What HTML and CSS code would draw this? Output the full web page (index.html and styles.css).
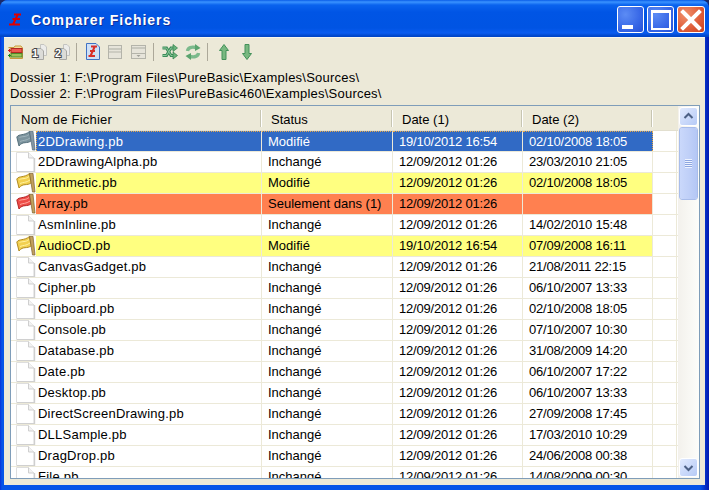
FILE: index.html
```html
<!DOCTYPE html>
<html lang="fr">
<head>
<meta charset="utf-8">
<title>Comparer Fichiers</title>
<link rel="stylesheet" href="styles.css">
</head>
<body>
<svg class="defs" width="0" height="0" aria-hidden="true">
  <defs>
    <symbol id="doc" viewBox="0 0 20 20">
      <path d="M.5 .5H12.5L18 6V19.5H.5Z" fill="#fff" stroke="#dedede"/>
      <path d="M12.5 .5V6H18" fill="#f2f2f2" stroke="#cfcfcf"/>
      <path d="M18.5 6V20" fill="none" stroke="#cfcfcf" stroke-width="1.4"/>
      <path d="M1 19.5H18" fill="none" stroke="#d0d0d0"/>
    </symbol>
    <symbol id="flag-y" viewBox="0 0 20 20">
      <path d="M.8 6C3 2.5 8 5 13.5 .5L15.5 9.5C11 13.5 7 9.5 3 15Z" fill="#f2d050" stroke="#b08a20"/>
      <path d="M3.5 6.5C6.5 5 9.5 6.5 13 3.5M4 10.5C7 9 10 10 14 7" fill="none" stroke="#fff2a0"/>
      <path d="M13.5 .5L17 .3L19 19H16.5Z" fill="#c2a05c" stroke="#7d6230" stroke-width=".7"/>
    </symbol>
    <symbol id="flag-r" viewBox="0 0 20 20">
      <path d="M.8 6C3 2.5 8 5 13.5 .5L15.5 9.5C11 13.5 7 9.5 3 15Z" fill="#ee4c48" stroke="#b42626"/>
      <path d="M3.5 6.5C6.5 5 9.5 6.5 13 3.5M4 10.5C7 9 10 10 14 7" fill="none" stroke="#ffa8a0"/>
      <path d="M13.5 .5L17 .3L19 19H16.5Z" fill="#c2a05c" stroke="#7d6230" stroke-width=".7"/>
    </symbol>
    <symbol id="flag-g" viewBox="0 0 20 20">
      <path d="M.8 6C3 2.5 8 5 13.5 .5L15.5 9.5C11 13.5 7 9.5 3 15Z" fill="#7d949e" stroke="#56707c"/>
      <path d="M3.5 6.5C6.5 5 9.5 6.5 13 3.5M4 10.5C7 9 10 10 14 7" fill="none" stroke="#a0b4bc"/>
      <path d="M13.5 .5L17 .3L19 19H16.5Z" fill="#8497a4" stroke="#566a78" stroke-width=".7"/>
    </symbol>
    <symbol id="pages" viewBox="0 0 16 16">
      <path d="M9.5 .5H13L15.5 3V11.5H9.5Z" fill="#ececea" stroke="#c4c4c0"/>
      <path d="M5.5 4.5H10L12.5 7V15.5H5.5Z" fill="#dcdcd8" stroke="#a8a8a4"/>
    </symbol>
  </defs>
</svg>
<div class="window">
  <header class="titlebar">
    <svg class="title-icon" width="14" height="13" viewBox="0 0 14 13">
      <path d="M5 1.5H12M3.5 6H11M0 11.5H11M9 1L4 11.5" fill="none" stroke="#e00000" stroke-width="2"/>
    </svg>
    <h1 class="title">Comparer Fichiers</h1>
    <div class="controls">
      <span class="ctl ctl-blue"><i class="min-glyph"></i></span>
      <span class="ctl ctl-blue"><i class="max-glyph"></i></span>
      <span class="ctl ctl-red">
        <svg width="26" height="26" viewBox="0 0 26 26"><path d="M5 5L21 21M21 5L5 21" stroke="#fff" stroke-width="4" stroke-linecap="square"/></svg>
      </span>
    </div>
  </header>
  <main class="client">
    <div class="toolbar">
      <span class="tool"><svg width="16" height="16" viewBox="0 0 16 16">
        <path d="M.5 3.5H6L7 2H13L14.5 4V14.5H2V12" fill="#f3dc9a" stroke="#c89a3c"/>
        <rect x="3" y="4.5" width="11" height="4" fill="#ec5a50" stroke="#b02a20"/>
        <rect x="3" y="9.5" width="11" height="3.5" fill="#9cc058" stroke="#4c8a28"/>
        <path d="M0 6.5H3M1.5 5V8" stroke="#d02020"/><path d="M0 11.5H3M1.5 10V13" stroke="#208a20"/>
      </svg></span>
      <span class="tool"><svg class="numbered" width="16" height="16" viewBox="0 0 16 16">
        <use href="#pages"/>
        <text x="1" y="13" class="num">1</text>
      </svg></span>
      <span class="tool"><svg class="numbered" width="16" height="16" viewBox="0 0 16 16">
        <use href="#pages"/>
        <text x="1" y="13" class="num">2</text>
      </svg></span>
      <span class="sep"></span>
      <span class="tool"><svg width="16" height="17" viewBox="0 0 16 17">
        <path d="M1.5 .5H11L14.5 4V16.5H1.5Z" fill="#cfe0f6" stroke="#3f72c4"/>
        <path d="M6 3.5H12M5 8H10M3.5 13H10M10 3L5.5 13" fill="none" stroke="#d8302a" stroke-width="2"/>
      </svg></span>
      <span class="tool"><svg width="16" height="16" viewBox="0 0 16 16">
        <rect x=".5" y="1.5" width="13" height="13" fill="#e6e4da" stroke="#b4b4aa"/>
        <path d="M1 5H13" stroke="#c8c8be" stroke-width="2"/><path d="M1 8H13" stroke="#b4b4aa"/>
      </svg></span>
      <span class="tool"><svg width="16" height="16" viewBox="0 0 16 16">
        <rect x=".5" y="1.5" width="14" height="13" fill="#e6e4da" stroke="#b4b4aa"/>
        <path d="M1 4H14" stroke="#c8c8be" stroke-width="2"/><path d="M1 9.5H14" stroke="#b4b4aa"/>
        <path d="M5.5 11L7.5 13L9.5 11Z" fill="#a0a098"/>
      </svg></span>
      <span class="sep"></span>
      <span class="tool"><svg width="16" height="16" viewBox="0 0 16 16">
        <path d="M.5 4H4.5L9 11.5H11.5M.5 11.5H4.5L9 4H11.5" fill="none" stroke="#3c8c5a" stroke-width="3"/>
        <path d="M.5 4H4.5L9 11.5H11.5M.5 11.5H4.5L9 4H11.5" fill="none" stroke="#8cc89c" stroke-width="1"/>
        <path d="M11 .5L15.5 4L11 7.5ZM11 8L15.5 11.5L11 15Z" fill="#6ab47c" stroke="#2f7f4a" stroke-width=".7"/>
      </svg></span>
      <span class="tool"><svg width="16" height="16" viewBox="0 0 16 16">
        <path d="M2.5 7C3 3.5 6.5 2.5 11 3.5" fill="none" stroke="#7cba8c" stroke-width="3.4"/>
        <path d="M13.5 9C13 12.5 9.5 13.5 5 12.5" fill="none" stroke="#7cba8c" stroke-width="3.4"/>
        <path d="M10 0L15.5 4L10 7ZM6 9L.5 12L6 16Z" fill="#5ba46e"/>
      </svg></span>
      <span class="sep"></span>
      <span class="tool"><svg width="16" height="16" viewBox="0 0 16 16">
        <path d="M3.5 6.5L8 .5L12.5 6.5H10V15.5H6V6.5Z" fill="#78b880" stroke="#43915a"/>
      </svg></span>
      <span class="tool"><svg width="16" height="16" viewBox="0 0 16 16">
        <path d="M3.5 9.5L8 15.5L12.5 9.5H10V.5H6V9.5Z" fill="#78b880" stroke="#43915a"/>
      </svg></span>
    </div>
    <p class="path first">Dossier 1: F:\Program Files\PureBasic\Examples\Sources\</p>
    <p class="path">Dossier 2: F:\Program Files\PureBasic460\Examples\Sources\</p>
    <section class="list">
      <div class="list-main">
        <div class="head">
          <span class="hcell hcell-name">Nom de Fichier</span>
          <span class="hcell hcell-status">Status</span>
          <span class="hcell hcell-d1">Date (1)</span>
          <span class="hcell hcell-d2">Date (2)</span>
          <span class="hcell hcell-end"></span>
        </div>
        <div class="row selected"><span class="ic"><svg width="20" height="20"><use href="#flag-g"/></svg></span><span class="c name">2DDrawing.pb</span><span class="c">Modifié</span><span class="c d">19/10/2012 16:54</span><span class="c d">02/10/2008 18:05</span><span class="fill"></span></div>
        <div class="row"><span class="ic"><svg width="20" height="20"><use href="#doc"/></svg></span><span class="c name">2DDrawingAlpha.pb</span><span class="c">Inchangé</span><span class="c d">12/09/2012 01:26</span><span class="c d">23/03/2010 21:05</span><span class="fill"></span></div>
        <div class="row modified"><span class="ic"><svg width="20" height="20"><use href="#flag-y"/></svg></span><span class="c name">Arithmetic.pb</span><span class="c">Modifié</span><span class="c d">12/09/2012 01:26</span><span class="c d">02/10/2008 18:05</span><span class="fill"></span></div>
        <div class="row only"><span class="ic"><svg width="20" height="20"><use href="#flag-r"/></svg></span><span class="c name">Array.pb</span><span class="c">Seulement dans (1)</span><span class="c d">12/09/2012 01:26</span><span class="c d"></span><span class="fill"></span></div>
        <div class="row"><span class="ic"><svg width="20" height="20"><use href="#doc"/></svg></span><span class="c name">AsmInline.pb</span><span class="c">Inchangé</span><span class="c d">12/09/2012 01:26</span><span class="c d">14/02/2010 15:48</span><span class="fill"></span></div>
        <div class="row modified"><span class="ic"><svg width="20" height="20"><use href="#flag-y"/></svg></span><span class="c name">AudioCD.pb</span><span class="c">Modifié</span><span class="c d">19/10/2012 16:54</span><span class="c d">07/09/2008 16:11</span><span class="fill"></span></div>
        <div class="row"><span class="ic"><svg width="20" height="20"><use href="#doc"/></svg></span><span class="c name">CanvasGadget.pb</span><span class="c">Inchangé</span><span class="c d">12/09/2012 01:26</span><span class="c d">21/08/2011 22:15</span><span class="fill"></span></div>
        <div class="row"><span class="ic"><svg width="20" height="20"><use href="#doc"/></svg></span><span class="c name">Cipher.pb</span><span class="c">Inchangé</span><span class="c d">12/09/2012 01:26</span><span class="c d">06/10/2007 13:33</span><span class="fill"></span></div>
        <div class="row"><span class="ic"><svg width="20" height="20"><use href="#doc"/></svg></span><span class="c name">Clipboard.pb</span><span class="c">Inchangé</span><span class="c d">12/09/2012 01:26</span><span class="c d">02/10/2008 18:05</span><span class="fill"></span></div>
        <div class="row"><span class="ic"><svg width="20" height="20"><use href="#doc"/></svg></span><span class="c name">Console.pb</span><span class="c">Inchangé</span><span class="c d">12/09/2012 01:26</span><span class="c d">07/10/2007 10:30</span><span class="fill"></span></div>
        <div class="row"><span class="ic"><svg width="20" height="20"><use href="#doc"/></svg></span><span class="c name">Database.pb</span><span class="c">Inchangé</span><span class="c d">12/09/2012 01:26</span><span class="c d">31/08/2009 14:20</span><span class="fill"></span></div>
        <div class="row"><span class="ic"><svg width="20" height="20"><use href="#doc"/></svg></span><span class="c name">Date.pb</span><span class="c">Inchangé</span><span class="c d">12/09/2012 01:26</span><span class="c d">06/10/2007 17:22</span><span class="fill"></span></div>
        <div class="row"><span class="ic"><svg width="20" height="20"><use href="#doc"/></svg></span><span class="c name">Desktop.pb</span><span class="c">Inchangé</span><span class="c d">12/09/2012 01:26</span><span class="c d">06/10/2007 13:33</span><span class="fill"></span></div>
        <div class="row"><span class="ic"><svg width="20" height="20"><use href="#doc"/></svg></span><span class="c name">DirectScreenDrawing.pb</span><span class="c">Inchangé</span><span class="c d">12/09/2012 01:26</span><span class="c d">27/09/2008 17:45</span><span class="fill"></span></div>
        <div class="row"><span class="ic"><svg width="20" height="20"><use href="#doc"/></svg></span><span class="c name">DLLSample.pb</span><span class="c">Inchangé</span><span class="c d">12/09/2012 01:26</span><span class="c d">17/03/2010 10:29</span><span class="fill"></span></div>
        <div class="row"><span class="ic"><svg width="20" height="20"><use href="#doc"/></svg></span><span class="c name">DragDrop.pb</span><span class="c">Inchangé</span><span class="c d">12/09/2012 01:26</span><span class="c d">24/06/2008 00:38</span><span class="fill"></span></div>
        <div class="row"><span class="ic"><svg width="20" height="20"><use href="#doc"/></svg></span><span class="c name">File.pb</span><span class="c">Inchangé</span><span class="c d">12/09/2012 01:26</span><span class="c d">14/08/2009 00:30</span><span class="fill"></span></div>
      </div>
      <div class="scrollbar">
        <span class="sb-btn"><svg width="19" height="19" viewBox="0 0 19 19"><path d="M5.5 11L9.5 7L13.5 11" fill="none" stroke="#4d6185" stroke-width="2"/></svg></span>
        <span class="sb-thumb"><i class="grip"></i></span>
        <span class="sb-track"></span>
        <span class="sb-btn"><svg width="19" height="19" viewBox="0 0 19 19"><path d="M5.5 8L9.5 12L13.5 8" fill="none" stroke="#4d6185" stroke-width="2"/></svg></span>
      </div>
    </section>
  </main>
</div>
</body>
</html>
```
FILE: styles.css
```css
* { box-sizing: border-box; }
html, body { margin: 0; padding: 0; }
body {
  width: 709px;
  height: 490px;
  overflow: hidden;
  background: #1a2a6a;
  font-family: "Liberation Sans", Arial, sans-serif;
  font-size: 13px;
  color: #000;
}
.defs { display: block; height: 0; }
.window {
  width: 709px;
  height: 490px;
  display: flex;
  flex-direction: column;
  border-radius: 8px 8px 0 0;
  background: linear-gradient(90deg, #0831d9 0, #0554e8 2px, #0554e8 700px, #0331c8 705px, #0019b0 709px);
  overflow: hidden;
}
.titlebar {
  height: 37px;
  flex: none;
  display: flex;
  align-items: flex-start;
  padding: 13px 0 0 9px;
  background: linear-gradient(180deg, #0a5de8 0, #3a93ff 2px, #0a63ee 5px, #0055e5 12px, #0054e3 28px, #0a5cf0 33px, #0046c8 36px);
  position: relative;
}
.title-icon { flex: none; }
.title {
  margin: -1px 0 0 8px;
  font-size: 14px;
  line-height: 16px;
  font-weight: 700;
  color: #fff;
  letter-spacing: .97px;
  text-shadow: 1px 1px 0 #0f2f9a;
}
.controls {
  display: flex;
  gap: 3px;
  margin: -7px 0 0 auto;
  padding-right: 4px;
}
.ctl {
  width: 27px;
  height: 27px;
  border: 1px solid #fff;
  border-radius: 3px;
  display: flex;
  align-items: center;
  justify-content: center;
  position: relative;
}
.ctl-blue { background: radial-gradient(circle at 30% 30%, #5c8cf4 0, #3a6ae8 55%, #2450d8 100%); }
.ctl-red { width: 28px; background: radial-gradient(circle at 30% 30%, #f0906c 0, #e0603c 55%, #c8401c 100%); }
.min-glyph {
  position: absolute;
  left: 4px;
  bottom: 3px;
  width: 11px;
  height: 4px;
  background: #fff;
}
.max-glyph {
  width: 20px;
  height: 20px;
  border: 2px solid #fff;
  border-top-width: 3px;
}
.client {
  flex: 1;
  min-height: 0;
  display: flex;
  flex-direction: column;
  margin: 0 4px 5px 4px;
  background: #ece9d8;
  border-top: 1px solid #f8f6ee;
}
.toolbar {
  height: 27px;
  flex: none;
  display: flex;
  align-items: center;
}
.tool {
  width: 23px;
  height: 22px;
  display: flex;
  align-items: center;
  justify-content: center;
}
.sep {
  width: 8px;
  height: 18px;
  position: relative;
}
.sep::before {
  content: "";
  position: absolute;
  left: 3px;
  top: 0;
  width: 1px;
  height: 18px;
  background: #aca899;
}
.numbered { overflow: visible; }
.num {
  font-family: "Liberation Sans", Arial, sans-serif;
  font-size: 11px;
  font-weight: 700;
  fill: #fff;
  stroke: #444;
  stroke-width: 2px;
  paint-order: stroke;
}
.path {
  margin: 0 0 0 6px;
  height: 16px;
  line-height: 16px;
  letter-spacing: .23px;
  white-space: nowrap;
  flex: none;
}
.path.first { margin-top: 5px; }
.list {
  flex: none;
  height: 374px;
  margin: 3px 5px 0 6px;
  border: 1px solid #7f9db9;
  background: #fff;
  display: flex;
  overflow: hidden;
}
.list-main {
  flex: 1;
  min-width: 0;
  overflow: hidden;
}
.head {
  display: grid;
  grid-template-columns: 250px 131px 130px 130px 1fr;
  height: 25px;
  background: #ece9d8;
  border-bottom: 1px solid #e2dfcf;
}
.hcell {
  position: relative;
  line-height: 27px;
  white-space: nowrap;
}
.hcell::after {
  content: "";
  position: absolute;
  right: 0;
  top: 4px;
  width: 1px;
  height: 17px;
  background: #c7c5b2;
  box-shadow: 1px 0 0 #fff;
}
.hcell-end::after { display: none; }
.hcell-name { padding-left: 10px; letter-spacing: .2px; }
.hcell-status { padding-left: 10px; }
.hcell-d1, .hcell-d2 { padding-left: 10px; }
.row {
  display: grid;
  grid-template-columns: 25px 226px 131px 130px 130px 24px;
  height: 21px;
  border-bottom: 1px solid #ece9d8;
}
.ic {
  background: #fff;
  display: flex;
  align-items: center;
  padding-left: 5px;
}
.ic svg { display: block; }
.c {
  line-height: 20px;
  padding-left: 6px;
  border-right: 1px solid #ece9d8;
  white-space: nowrap;
  overflow: hidden;
}
.name { padding-left: 2px; letter-spacing: .23px; }
.d { letter-spacing: -.2px; }
.fill { border-right: 1px solid #ece9d8; }
.selected .c {
  background: #316ac5;
  color: #fff;
  border-top: 1px dotted #e8a848;
  line-height: 19px;
}
.selected .name { border-left: 1px dotted #e8a848; padding-left: 1px; }
.selected .c:nth-child(5) { border-right: 1px dotted #e8a848; }
.modified .c { background: #ffff80; }
.only .c { background: #ff8050; }
.scrollbar {
  flex: none;
  width: 21px;
  display: flex;
  flex-direction: column;
  padding: 1px;
  background: linear-gradient(90deg, #f3f1ec, #fdfdfa);
}
.sb-btn {
  flex: none;
  width: 19px;
  height: 19px;
  border: 1px solid #fff;
  border-radius: 3px;
  background: linear-gradient(135deg, #e1eafe, #b6caf6);
  display: block;
}
.sb-btn svg { display: block; margin: -1px; }
.sb-thumb {
  flex: none;
  width: 19px;
  height: 73px;
  margin-top: 1px;
  border: 1px solid #fff;
  outline: 1px solid #a8bcea;
  outline-offset: -1px;
  border-radius: 3px;
  background: linear-gradient(90deg, #cad8fb, #c0d0f8 50%, #b4c7f5);
  display: flex;
  align-items: center;
  justify-content: center;
}
.grip {
  display: block;
  width: 7px;
  height: 9px;
  background: repeating-linear-gradient(180deg, #eef3ff 0 1px, #8da6e0 1px 2px);
}
.sb-track { flex: 1; min-height: 0; }
```
